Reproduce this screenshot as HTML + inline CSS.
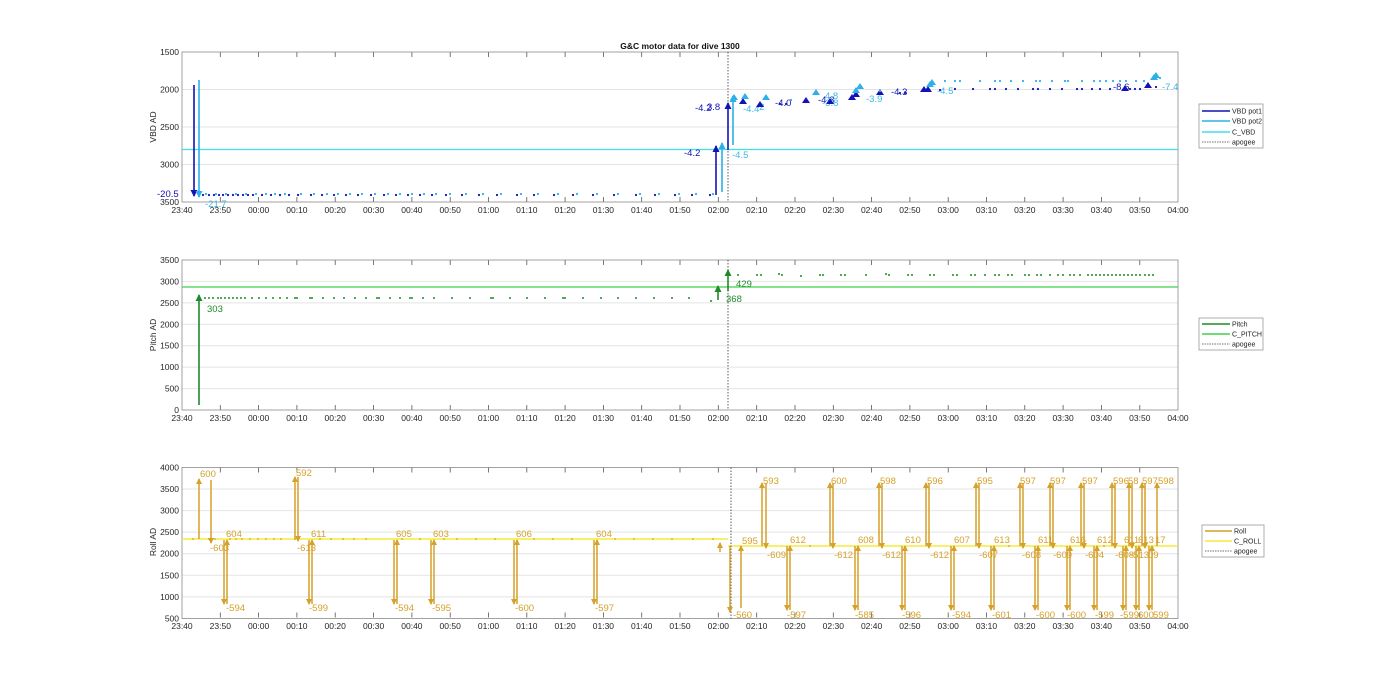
<!DOCTYPE html>
<html><head><meta charset="utf-8"><style>
html,body{margin:0;padding:0;background:#fff;}
svg{display:block;font-family:"Liberation Sans",Arial,sans-serif;}
.tk{font-size:8.5px;fill:#262626;text-anchor:middle}
.yt{font-size:8.5px;fill:#262626;text-anchor:end}
.gr line{stroke:#e4e4e4;stroke-width:1}
.bx{fill:none;stroke:#8a8a8a;stroke-width:0.8}
</style></head><body>
<svg width="1400" height="693" viewBox="0 0 1400 693" xmlns="http://www.w3.org/2000/svg">
<defs>
<g id="vg">
<line x1="220.3" y1="0" x2="220.3" y2="150"/><line x1="258.6" y1="0" x2="258.6" y2="150"/><line x1="296.9" y1="0" x2="296.9" y2="150"/><line x1="335.2" y1="0" x2="335.2" y2="150"/><line x1="373.6" y1="0" x2="373.6" y2="150"/><line x1="411.9" y1="0" x2="411.9" y2="150"/><line x1="450.2" y1="0" x2="450.2" y2="150"/><line x1="488.5" y1="0" x2="488.5" y2="150"/><line x1="526.8" y1="0" x2="526.8" y2="150"/><line x1="565.1" y1="0" x2="565.1" y2="150"/><line x1="603.4" y1="0" x2="603.4" y2="150"/><line x1="641.7" y1="0" x2="641.7" y2="150"/><line x1="680" y1="0" x2="680" y2="150"/><line x1="718.3" y1="0" x2="718.3" y2="150"/><line x1="756.7" y1="0" x2="756.7" y2="150"/><line x1="795" y1="0" x2="795" y2="150"/><line x1="833.3" y1="0" x2="833.3" y2="150"/><line x1="871.6" y1="0" x2="871.6" y2="150"/><line x1="909.9" y1="0" x2="909.9" y2="150"/><line x1="948.2" y1="0" x2="948.2" y2="150"/><line x1="986.5" y1="0" x2="986.5" y2="150"/><line x1="1024.8" y1="0" x2="1024.8" y2="150"/><line x1="1063.1" y1="0" x2="1063.1" y2="150"/><line x1="1101.4" y1="0" x2="1101.4" y2="150"/><line x1="1139.8" y1="0" x2="1139.8" y2="150"/>
</g>
<g id="tks" stroke="#555" stroke-width="0.8">
<path d="M220.3 0v5M258.6 0v5M296.9 0v5M335.2 0v5M373.6 0v5M411.9 0v5M450.2 0v5M488.5 0v5M526.8 0v5M565.1 0v5M603.4 0v5M641.7 0v5M680 0v5M718.3 0v5M756.7 0v5M795 0v5M833.3 0v5M871.6 0v5M909.9 0v5M948.2 0v5M986.5 0v5M1024.8 0v5M1063.1 0v5M1101.4 0v5M1139.8 0v5M220.3 150v-5M258.6 150v-5M296.9 150v-5M335.2 150v-5M373.6 150v-5M411.9 150v-5M450.2 150v-5M488.5 150v-5M526.8 150v-5M565.1 150v-5M603.4 150v-5M641.7 150v-5M680 150v-5M718.3 150v-5M756.7 150v-5M795 150v-5M833.3 150v-5M871.6 150v-5M909.9 150v-5M948.2 150v-5M986.5 150v-5M1024.8 150v-5M1063.1 150v-5M1101.4 150v-5M1139.8 150v-5"/>
</g>
<marker id="mR" markerWidth="6" markerHeight="6" refX="5" refY="3" orient="auto" markerUnits="userSpaceOnUse"><path d="M0 0L6 3L0 6z" fill="#D4A12A"/></marker>
<marker id="mG" markerWidth="7" markerHeight="7" refX="6" refY="3.5" orient="auto" markerUnits="userSpaceOnUse"><path d="M0 0L7 3.5L0 7z" fill="#1E8A2A"/></marker>
<marker id="mB" markerWidth="7" markerHeight="7" refX="6" refY="3.5" orient="auto" markerUnits="userSpaceOnUse"><path d="M0 0L7 3.5L0 7z" fill="#1212B8"/></marker>
<marker id="mL" markerWidth="7" markerHeight="7" refX="6" refY="3.5" orient="auto" markerUnits="userSpaceOnUse"><path d="M0 0L7 3.5L0 7z" fill="#2CB0E8"/></marker>
</defs>

<text x="680" y="49" style="font-size:8.5px;font-weight:bold;fill:#111;text-anchor:middle">G&amp;C motor data for dive 1300</text>

<!-- ===== TOP VBD ===== -->
<g class="gr"><use href="#vg" transform="translate(0,52)"/>
<line x1="182" y1="89.5" x2="1178" y2="89.5"/><line x1="182" y1="127" x2="1178" y2="127"/><line x1="182" y1="164.5" x2="1178" y2="164.5"/></g>
<use href="#tks" transform="translate(0,52)"/>
<rect class="bx" x="182" y="52" width="996" height="150"/>
<g class="yt"><text x="179" y="55">1500</text><text x="179" y="92.5">2000</text><text x="179" y="130">2500</text><text x="179" y="167.5">3000</text><text x="179" y="205">3500</text></g>
<text transform="translate(156,127) rotate(-90)" style="font-size:8.5px;fill:#262626;text-anchor:middle">VBD AD</text>
<line x1="182" y1="149.5" x2="1178" y2="149.5" stroke="#3EE0E8" stroke-width="1.2"/>
<line x1="728" y1="52" x2="728" y2="202" stroke="#333" stroke-width="0.8" stroke-dasharray="1.5,1.5"/>
<!-- arrows -->
<line x1="194" y1="85" x2="194" y2="196" stroke="#1212B8" stroke-width="1.6" marker-end="url(#mB)"/>
<line x1="199" y1="80" x2="199" y2="197" stroke="#2CB0E8" stroke-width="1.6" marker-end="url(#mL)"/>
<line x1="716" y1="195" x2="716" y2="146" stroke="#1212B8" stroke-width="1.6" marker-end="url(#mB)"/>
<line x1="722" y1="192" x2="722" y2="143" stroke="#2CB0E8" stroke-width="1.6" marker-end="url(#mL)"/>
<line x1="728" y1="150" x2="728" y2="103" stroke="#1212B8" stroke-width="1.6" marker-end="url(#mB)"/>
<line x1="733" y1="145" x2="733" y2="96" stroke="#2CB0E8" stroke-width="1.6" marker-end="url(#mL)"/>
<g fill="#1212B8" style="font-size:9.5px">
<text x="157" y="197">-20.5</text><text x="684" y="156">-4.2</text><text x="695" y="111">-4.2</text><text x="707" y="110">3.8</text><text x="775" y="106">-4.0</text><text x="818" y="103">-4.3</text><text x="891" y="95">-4.3</text><text x="1113" y="90">-8.6</text>
</g>
<g fill="#3DB8E6" style="font-size:9.5px">
<text x="205" y="207">-21.7</text><text x="732" y="158">-4.5</text><text x="743" y="112">-4.4</text><text x="756" y="110">-2</text><text x="822" y="106">-3.8</text><text x="866" y="102">-3.9</text><text x="937" y="94">-4.5</text><text x="1162" y="90">-7.4</text><text x="825" y="99">4.8</text>
</g>
<!-- triangles -->
<g fill="#1212B8">
<path d="M739 104l4-6 4 6z M756 107l4-6 4 6z M802 103l4-6 4 6z M826 104l4-6 4 6z M848 100l4-6 4 6z M852 97l4-6 4 6z M876 95l4-6 4 6z M920 92l4-6 4 6z M924 92l4-6 4 6z M1121 91l4-6 4 6z M1144 88l4-6 4 6z"/>
</g>
<g fill="#2CB0E8">
<path d="M730 100l4-6 4 6z M741 99l4-6 4 6z M762 100l4-6 4 6z M812 95l4-6 4 6z M852 93l4-6 4 6z M856 89l4-6 4 6z M926 87l4-6 4 6z M928 85l4-6 4 6z M1150 80l4-6 4 6z M1152 78l4-6 4 6z"/>
</g>
<!-- dots pre-apogee -->
<g fill="#1212B8">
<circle cx="203" cy="195" r="1.1"/><circle cx="209" cy="195" r="1.1"/><circle cx="214" cy="195" r="1.1"/><circle cx="219" cy="195" r="1.1"/><circle cx="223" cy="195" r="1.1"/><circle cx="228" cy="195" r="1.1"/><circle cx="233" cy="195" r="1.1"/><circle cx="238" cy="195" r="1.1"/><circle cx="243" cy="195" r="1.1"/><circle cx="248" cy="195" r="1.1"/><circle cx="253" cy="195" r="1.1"/><circle cx="262" cy="195" r="1.1"/><circle cx="271" cy="195" r="1.1"/><circle cx="280" cy="195" r="1.1"/><circle cx="289" cy="195" r="1.1"/><circle cx="298" cy="195" r="1.1"/><circle cx="311" cy="195" r="1.1"/><circle cx="322" cy="195" r="1.1"/><circle cx="334" cy="195" r="1.1"/><circle cx="346" cy="195" r="1.1"/><circle cx="358" cy="195" r="1.1"/><circle cx="371" cy="195" r="1.1"/><circle cx="384" cy="195" r="1.1"/><circle cx="396" cy="195" r="1.1"/><circle cx="408" cy="195" r="1.1"/><circle cx="420" cy="195" r="1.1"/><circle cx="432" cy="195" r="1.1"/><circle cx="446" cy="195" r="1.1"/><circle cx="462" cy="195" r="1.1"/><circle cx="479" cy="195" r="1.1"/><circle cx="497" cy="195" r="1.1"/><circle cx="517" cy="195" r="1.1"/><circle cx="534" cy="195" r="1.1"/><circle cx="554" cy="195" r="1.1"/><circle cx="573" cy="195" r="1.1"/><circle cx="593" cy="195" r="1.1"/><circle cx="614" cy="195" r="1.1"/><circle cx="636" cy="195" r="1.1"/><circle cx="655" cy="195" r="1.1"/><circle cx="675" cy="195" r="1.1"/><circle cx="692" cy="195" r="1.1"/><circle cx="710" cy="195" r="1.1"/>
</g>
<g fill="#2CB0E8">
<circle cx="206" cy="194" r="1.1"/><circle cx="216" cy="194" r="1.1"/><circle cx="226" cy="194" r="1.1"/><circle cx="236" cy="194" r="1.1"/><circle cx="246" cy="194" r="1.1"/><circle cx="256" cy="194" r="1.1"/><circle cx="266" cy="194" r="1.1"/><circle cx="275" cy="194" r="1.1"/><circle cx="285" cy="194" r="1.1"/><circle cx="301" cy="194" r="1.1"/><circle cx="314" cy="194" r="1.1"/><circle cx="327" cy="194" r="1.1"/><circle cx="338" cy="194" r="1.1"/><circle cx="350" cy="194" r="1.1"/><circle cx="362" cy="194" r="1.1"/><circle cx="375" cy="194" r="1.1"/><circle cx="388" cy="194" r="1.1"/><circle cx="400" cy="194" r="1.1"/><circle cx="412" cy="194" r="1.1"/><circle cx="424" cy="194" r="1.1"/><circle cx="436" cy="194" r="1.1"/><circle cx="450" cy="194" r="1.1"/><circle cx="466" cy="194" r="1.1"/><circle cx="483" cy="194" r="1.1"/><circle cx="501" cy="194" r="1.1"/><circle cx="521" cy="194" r="1.1"/><circle cx="538" cy="194" r="1.1"/><circle cx="558" cy="194" r="1.1"/><circle cx="577" cy="194" r="1.1"/><circle cx="597" cy="194" r="1.1"/><circle cx="618" cy="194" r="1.1"/><circle cx="640" cy="194" r="1.1"/><circle cx="659" cy="194" r="1.1"/><circle cx="679" cy="194" r="1.1"/><circle cx="696" cy="194" r="1.1"/><circle cx="713" cy="194" r="1.1"/>
</g>
<!-- dots post-apogee -->
<g fill="#1212B8">
<circle cx="780" cy="104" r="1.1"/><circle cx="786" cy="104" r="1.1"/><circle cx="900" cy="93" r="1.1"/><circle cx="905" cy="93" r="1.1"/><circle cx="940" cy="90" r="1.1"/><circle cx="955" cy="89" r="1.1"/><circle cx="973" cy="89" r="1.1"/><circle cx="990" cy="89" r="1.1"/><circle cx="995" cy="89" r="1.1"/><circle cx="1006" cy="89" r="1.1"/><circle cx="1018" cy="89" r="1.1"/><circle cx="1033" cy="89" r="1.1"/><circle cx="1038" cy="89" r="1.1"/><circle cx="1050" cy="89" r="1.1"/><circle cx="1062" cy="89" r="1.1"/><circle cx="1077" cy="89" r="1.1"/><circle cx="1082" cy="89" r="1.1"/><circle cx="1092" cy="89" r="1.1"/><circle cx="1100" cy="89" r="1.1"/><circle cx="1110" cy="89" r="1.1"/><circle cx="1130" cy="89" r="1.1"/><circle cx="1135" cy="89" r="1.1"/><circle cx="1140" cy="89" r="1.1"/><circle cx="1156" cy="87" r="1.1"/>
</g>
<g fill="#2CB0E8">
<circle cx="791" cy="100" r="1.1"/><circle cx="880" cy="91" r="1.1"/><circle cx="945" cy="81" r="1.1"/><circle cx="955" cy="81" r="1.1"/><circle cx="960" cy="81" r="1.1"/><circle cx="980" cy="81" r="1.1"/><circle cx="995" cy="81" r="1.1"/><circle cx="1000" cy="81" r="1.1"/><circle cx="1011" cy="81" r="1.1"/><circle cx="1023" cy="81" r="1.1"/><circle cx="1036" cy="81" r="1.1"/><circle cx="1040" cy="81" r="1.1"/><circle cx="1052" cy="81" r="1.1"/><circle cx="1065" cy="81" r="1.1"/><circle cx="1068" cy="81" r="1.1"/><circle cx="1082" cy="81" r="1.1"/><circle cx="1094" cy="81" r="1.1"/><circle cx="1100" cy="81" r="1.1"/><circle cx="1106" cy="81" r="1.1"/><circle cx="1113" cy="81" r="1.1"/><circle cx="1120" cy="81" r="1.1"/><circle cx="1126" cy="81" r="1.1"/><circle cx="1136" cy="81" r="1.1"/><circle cx="1144" cy="81" r="1.1"/><circle cx="1160" cy="78" r="1.1"/>
</g>
<!-- x labels top -->
<g class="tk"><text x="182" y="213">23:40</text><text x="220.3" y="213">23:50</text><text x="258.6" y="213">00:00</text><text x="296.9" y="213">00:10</text><text x="335.2" y="213">00:20</text><text x="373.6" y="213">00:30</text><text x="411.9" y="213">00:40</text><text x="450.2" y="213">00:50</text><text x="488.5" y="213">01:00</text><text x="526.8" y="213">01:10</text><text x="565.1" y="213">01:20</text><text x="603.4" y="213">01:30</text><text x="641.7" y="213">01:40</text><text x="680" y="213">01:50</text><text x="718.3" y="213">02:00</text><text x="756.7" y="213">02:10</text><text x="795" y="213">02:20</text><text x="833.3" y="213">02:30</text><text x="871.6" y="213">02:40</text><text x="909.9" y="213">02:50</text><text x="948.2" y="213">03:00</text><text x="986.5" y="213">03:10</text><text x="1024.8" y="213">03:20</text><text x="1063.1" y="213">03:30</text><text x="1101.4" y="213">03:40</text><text x="1139.8" y="213">03:50</text><text x="1178" y="213">04:00</text></g>
<!-- legend top -->
<rect x="1199" y="104" width="64" height="44" fill="#fff" stroke="#999" stroke-width="0.8"/>
<line x1="1202" y1="111" x2="1230" y2="111" stroke="#1212B8" stroke-width="1.5"/>
<line x1="1202" y1="121" x2="1230" y2="121" stroke="#2CB0E8" stroke-width="1.5"/>
<line x1="1202" y1="132" x2="1230" y2="132" stroke="#3EE0E8" stroke-width="1.5"/>
<line x1="1202" y1="142" x2="1230" y2="142" stroke="#444" stroke-width="0.8" stroke-dasharray="1.5,1"/>
<g style="font-size:7px;fill:#222"><text x="1232" y="113.5">VBD pot1</text><text x="1232" y="123.5">VBD pot2</text><text x="1232" y="134.5">C_VBD</text><text x="1232" y="144.5">apogee</text></g>

<!-- ===== MIDDLE PITCH ===== -->
<g class="gr"><use href="#vg" transform="translate(0,260)"/>
<line x1="182" y1="281.4" x2="1178" y2="281.4"/><line x1="182" y1="302.9" x2="1178" y2="302.9"/><line x1="182" y1="324.3" x2="1178" y2="324.3"/><line x1="182" y1="345.7" x2="1178" y2="345.7"/><line x1="182" y1="367.1" x2="1178" y2="367.1"/><line x1="182" y1="388.6" x2="1178" y2="388.6"/></g>
<use href="#tks" transform="translate(0,260)"/>
<rect class="bx" x="182" y="260" width="996" height="150"/>
<g class="yt"><text x="179" y="263">3500</text><text x="179" y="284.4">3000</text><text x="179" y="305.9">2500</text><text x="179" y="327.3">2000</text><text x="179" y="348.7">1500</text><text x="179" y="370.1">1000</text><text x="179" y="391.6">500</text><text x="179" y="413">0</text></g>
<text transform="translate(156,335) rotate(-90)" style="font-size:8.5px;fill:#262626;text-anchor:middle">Pitch AD</text>
<line x1="182" y1="287" x2="1178" y2="287" stroke="#3ED04A" stroke-width="1.2"/>
<line x1="728" y1="260" x2="728" y2="410" stroke="#333" stroke-width="0.8" stroke-dasharray="1.5,1.5"/>
<line x1="199" y1="405" x2="199" y2="295" stroke="#1E8A2A" stroke-width="1.6" marker-end="url(#mG)"/>
<line x1="718" y1="300" x2="718" y2="286" stroke="#1E8A2A" stroke-width="1.6" marker-end="url(#mG)"/>
<line x1="728" y1="291" x2="728" y2="270" stroke="#1E8A2A" stroke-width="1.6" marker-end="url(#mG)"/>
<g fill="#1E8A2A" style="font-size:9.5px"><text x="207" y="312">303</text><text x="726" y="302">368</text><text x="736" y="287">429</text></g>
<g fill="#1E8A2A">
<circle cx="205" cy="298" r="1"/><circle cx="209" cy="298" r="1"/><circle cx="213" cy="298" r="1"/><circle cx="218" cy="298" r="1"/><circle cx="221" cy="298" r="1"/><circle cx="225" cy="298" r="1"/><circle cx="229" cy="298" r="1"/><circle cx="233" cy="298" r="1"/><circle cx="237" cy="298" r="1"/><circle cx="241" cy="298" r="1"/><circle cx="245" cy="298" r="1"/><circle cx="252" cy="298" r="1"/><circle cx="259" cy="298" r="1"/><circle cx="266" cy="298" r="1"/><circle cx="273" cy="298" r="1"/><circle cx="280" cy="298" r="1"/><circle cx="287" cy="298" r="1"/><circle cx="295" cy="298" r="1"/><circle cx="297" cy="298" r="1"/><circle cx="310" cy="298" r="1"/><circle cx="312" cy="298" r="1"/><circle cx="323" cy="298" r="1"/><circle cx="334" cy="298" r="1"/><circle cx="344" cy="298" r="1"/><circle cx="355" cy="298" r="1"/><circle cx="366" cy="298" r="1"/><circle cx="377" cy="298" r="1"/><circle cx="379" cy="298" r="1"/><circle cx="390" cy="298" r="1"/><circle cx="400" cy="298" r="1"/><circle cx="410" cy="298" r="1"/><circle cx="412" cy="298" r="1"/><circle cx="423" cy="298" r="1"/><circle cx="434" cy="298" r="1"/><circle cx="452" cy="298" r="1"/><circle cx="470" cy="298" r="1"/><circle cx="491" cy="298" r="1"/><circle cx="493" cy="298" r="1"/><circle cx="510" cy="298" r="1"/><circle cx="527" cy="298" r="1"/><circle cx="545" cy="298" r="1"/><circle cx="563" cy="298" r="1"/><circle cx="565" cy="298" r="1"/><circle cx="583" cy="298" r="1"/><circle cx="601" cy="298" r="1"/><circle cx="618" cy="298" r="1"/><circle cx="636" cy="298" r="1"/><circle cx="654" cy="298" r="1"/><circle cx="672" cy="298" r="1"/><circle cx="689" cy="298" r="1"/><circle cx="711" cy="301" r="1"/>
<circle cx="738" cy="275" r="1"/><circle cx="757" cy="275" r="1"/><circle cx="761" cy="275" r="1"/><circle cx="779" cy="274" r="1"/><circle cx="782" cy="275" r="1"/><circle cx="801" cy="276" r="1"/><circle cx="820" cy="275" r="1"/><circle cx="823" cy="275" r="1"/><circle cx="841" cy="275" r="1"/><circle cx="845" cy="275" r="1"/><circle cx="866" cy="275" r="1"/><circle cx="886" cy="274" r="1"/><circle cx="889" cy="275" r="1"/><circle cx="908" cy="275" r="1"/><circle cx="912" cy="275" r="1"/><circle cx="930" cy="275" r="1"/><circle cx="934" cy="275" r="1"/><circle cx="953" cy="275" r="1"/><circle cx="957" cy="275" r="1"/><circle cx="971" cy="275" r="1"/><circle cx="975" cy="275" r="1"/><circle cx="985" cy="275" r="1"/><circle cx="995" cy="275" r="1"/><circle cx="999" cy="275" r="1"/><circle cx="1008" cy="275" r="1"/><circle cx="1012" cy="275" r="1"/><circle cx="1025" cy="275" r="1"/><circle cx="1029" cy="275" r="1"/><circle cx="1037" cy="275" r="1"/><circle cx="1041" cy="275" r="1"/><circle cx="1050" cy="275" r="1"/><circle cx="1058" cy="275" r="1"/><circle cx="1063" cy="275" r="1"/><circle cx="1070" cy="275" r="1"/><circle cx="1074" cy="275" r="1"/><circle cx="1080" cy="275" r="1"/><circle cx="1088" cy="275" r="1"/><circle cx="1092" cy="275" r="1"/><circle cx="1096" cy="275" r="1"/><circle cx="1100" cy="275" r="1"/><circle cx="1104" cy="275" r="1"/><circle cx="1108" cy="275" r="1"/><circle cx="1112" cy="275" r="1"/><circle cx="1116" cy="275" r="1"/><circle cx="1120" cy="275" r="1"/><circle cx="1124" cy="275" r="1"/><circle cx="1128" cy="275" r="1"/><circle cx="1132" cy="275" r="1"/><circle cx="1136" cy="275" r="1"/><circle cx="1140" cy="275" r="1"/><circle cx="1145" cy="275" r="1"/><circle cx="1149" cy="275" r="1"/><circle cx="1153" cy="275" r="1"/>
</g>
<g class="tk"><text x="182" y="421">23:40</text><text x="220.3" y="421">23:50</text><text x="258.6" y="421">00:00</text><text x="296.9" y="421">00:10</text><text x="335.2" y="421">00:20</text><text x="373.6" y="421">00:30</text><text x="411.9" y="421">00:40</text><text x="450.2" y="421">00:50</text><text x="488.5" y="421">01:00</text><text x="526.8" y="421">01:10</text><text x="565.1" y="421">01:20</text><text x="603.4" y="421">01:30</text><text x="641.7" y="421">01:40</text><text x="680" y="421">01:50</text><text x="718.3" y="421">02:00</text><text x="756.7" y="421">02:10</text><text x="795" y="421">02:20</text><text x="833.3" y="421">02:30</text><text x="871.6" y="421">02:40</text><text x="909.9" y="421">02:50</text><text x="948.2" y="421">03:00</text><text x="986.5" y="421">03:10</text><text x="1024.8" y="421">03:20</text><text x="1063.1" y="421">03:30</text><text x="1101.4" y="421">03:40</text><text x="1139.8" y="421">03:50</text><text x="1178" y="421">04:00</text></g>
<rect x="1199" y="318" width="64" height="32" fill="#fff" stroke="#999" stroke-width="0.8"/>
<line x1="1202" y1="324" x2="1230" y2="324" stroke="#1E8A2A" stroke-width="1.5"/>
<line x1="1202" y1="334" x2="1230" y2="334" stroke="#3ED04A" stroke-width="1.5"/>
<line x1="1202" y1="344" x2="1230" y2="344" stroke="#444" stroke-width="0.8" stroke-dasharray="1.5,1"/>
<g style="font-size:7px;fill:#222"><text x="1232" y="326.5">Pitch</text><text x="1232" y="336.5">C_PITCH</text><text x="1232" y="346.5">apogee</text></g>

<!-- ===== BOTTOM ROLL ===== -->
<g class="gr"><use href="#vg" transform="translate(0,467.5)"/>
<line x1="182" y1="489" x2="1178" y2="489"/><line x1="182" y1="510.6" x2="1178" y2="510.6"/><line x1="182" y1="532.1" x2="1178" y2="532.1"/><line x1="182" y1="553.7" x2="1178" y2="553.7"/><line x1="182" y1="575.3" x2="1178" y2="575.3"/><line x1="182" y1="596.9" x2="1178" y2="596.9"/></g>
<use href="#tks" transform="translate(0,467.5)"/>
<rect class="bx" x="182" y="467.5" width="996" height="151"/>
<g class="yt"><text x="179" y="470.5">4000</text><text x="179" y="492">3500</text><text x="179" y="513.6">3000</text><text x="179" y="535.1">2500</text><text x="179" y="556.7">2000</text><text x="179" y="578.3">1500</text><text x="179" y="599.9">1000</text><text x="179" y="621.5">500</text></g>
<text transform="translate(156,542) rotate(-90)" style="font-size:8.5px;fill:#262626;text-anchor:middle">Roll AD</text>
<path d="M182 539H728" stroke="#F5EB3C" stroke-width="1.4"/>
<path d="M728 546H1178" stroke="#F5EB3C" stroke-width="1.4"/>
<line x1="731" y1="467.5" x2="731" y2="618.5" stroke="#333" stroke-width="0.8" stroke-dasharray="1.5,1.5"/>
<g fill="#D4A12A">
<circle cx="193" cy="539" r="0.9"/><circle cx="209" cy="539" r="0.9"/><circle cx="215" cy="539" r="0.9"/><circle cx="230" cy="539" r="0.9"/><circle cx="236" cy="539" r="0.9"/><circle cx="242" cy="539" r="0.9"/><circle cx="250" cy="539" r="0.9"/><circle cx="258" cy="539" r="0.9"/><circle cx="266" cy="539" r="0.9"/><circle cx="274" cy="539" r="0.9"/><circle cx="281" cy="539" r="0.9"/><circle cx="320" cy="539" r="0.9"/><circle cx="331" cy="539" r="0.9"/><circle cx="343" cy="539" r="0.9"/><circle cx="354" cy="539" r="0.9"/><circle cx="366" cy="539" r="0.9"/><circle cx="402" cy="539" r="0.9"/><circle cx="420" cy="539" r="0.9"/><circle cx="444" cy="539" r="0.9"/><circle cx="457" cy="539" r="0.9"/><circle cx="476" cy="539" r="0.9"/><circle cx="495" cy="539" r="0.9"/><circle cx="534" cy="539" r="0.9"/><circle cx="553" cy="539" r="0.9"/><circle cx="572" cy="539" r="0.9"/><circle cx="615" cy="539" r="0.9"/><circle cx="634" cy="539" r="0.9"/><circle cx="653" cy="539" r="0.9"/><circle cx="672" cy="539" r="0.9"/><circle cx="693" cy="539" r="0.9"/><circle cx="713" cy="539" r="0.9"/><circle cx="810" cy="546" r="0.9"/><circle cx="1009" cy="546" r="0.9"/><circle cx="1104" cy="546" r="0.9"/>
</g>
<g stroke="#D4A12A" stroke-width="1.5" fill="none">
<!-- left -->
<line x1="199" y1="539" x2="199" y2="479" marker-end="url(#mR)"/>
<line x1="211" y1="480" x2="211" y2="543" marker-end="url(#mR)"/>
<line x1="224" y1="540" x2="224" y2="604" marker-end="url(#mR)"/>
<line x1="227" y1="604" x2="227" y2="540" marker-end="url(#mR)"/>
<line x1="295" y1="540" x2="295" y2="477" marker-end="url(#mR)"/>
<line x1="298" y1="477" x2="298" y2="541" marker-end="url(#mR)"/>
<line x1="309" y1="540" x2="309" y2="604" marker-end="url(#mR)"/>
<line x1="312" y1="604" x2="312" y2="540" marker-end="url(#mR)"/>
<line x1="394" y1="540" x2="394" y2="604" marker-end="url(#mR)"/><line x1="397" y1="604" x2="397" y2="540" marker-end="url(#mR)"/>
<line x1="431" y1="540" x2="431" y2="604" marker-end="url(#mR)"/><line x1="434" y1="604" x2="434" y2="540" marker-end="url(#mR)"/>
<line x1="514" y1="540" x2="514" y2="604" marker-end="url(#mR)"/><line x1="517" y1="604" x2="517" y2="540" marker-end="url(#mR)"/>
<line x1="594" y1="540" x2="594" y2="604" marker-end="url(#mR)"/><line x1="597" y1="604" x2="597" y2="540" marker-end="url(#mR)"/>
<line x1="720" y1="552" x2="720" y2="543" marker-end="url(#mR)"/>
<!-- right -->
<line x1="730" y1="546" x2="730" y2="612" marker-end="url(#mR)"/>
<line x1="741" y1="608" x2="741" y2="546" marker-end="url(#mR)"/>
<line x1="762" y1="546" x2="762" y2="483" marker-end="url(#mR)"/><line x1="766" y1="483" x2="766" y2="548" marker-end="url(#mR)"/>
<line x1="787" y1="546" x2="787" y2="610" marker-end="url(#mR)"/><line x1="790" y1="610" x2="790" y2="546" marker-end="url(#mR)"/>
<line x1="830" y1="546" x2="830" y2="483" marker-end="url(#mR)"/><line x1="833" y1="483" x2="833" y2="548" marker-end="url(#mR)"/>
<line x1="855" y1="546" x2="855" y2="610" marker-end="url(#mR)"/><line x1="858" y1="610" x2="858" y2="546" marker-end="url(#mR)"/>
<line x1="879" y1="546" x2="879" y2="483" marker-end="url(#mR)"/><line x1="882" y1="483" x2="882" y2="548" marker-end="url(#mR)"/>
<line x1="902" y1="546" x2="902" y2="610" marker-end="url(#mR)"/><line x1="905" y1="610" x2="905" y2="546" marker-end="url(#mR)"/>
<line x1="926" y1="546" x2="926" y2="483" marker-end="url(#mR)"/><line x1="929" y1="483" x2="929" y2="548" marker-end="url(#mR)"/>
<line x1="951" y1="546" x2="951" y2="610" marker-end="url(#mR)"/><line x1="954" y1="610" x2="954" y2="546" marker-end="url(#mR)"/>
<line x1="976" y1="546" x2="976" y2="483" marker-end="url(#mR)"/><line x1="979" y1="483" x2="979" y2="548" marker-end="url(#mR)"/>
<line x1="991" y1="546" x2="991" y2="610" marker-end="url(#mR)"/><line x1="994" y1="610" x2="994" y2="546" marker-end="url(#mR)"/>
<line x1="1020" y1="546" x2="1020" y2="483" marker-end="url(#mR)"/><line x1="1023" y1="483" x2="1023" y2="548" marker-end="url(#mR)"/>
<line x1="1035" y1="546" x2="1035" y2="610" marker-end="url(#mR)"/><line x1="1038" y1="610" x2="1038" y2="546" marker-end="url(#mR)"/>
<line x1="1050" y1="546" x2="1050" y2="483" marker-end="url(#mR)"/><line x1="1053" y1="483" x2="1053" y2="548" marker-end="url(#mR)"/>
<line x1="1067" y1="546" x2="1067" y2="610" marker-end="url(#mR)"/><line x1="1070" y1="610" x2="1070" y2="546" marker-end="url(#mR)"/>
<line x1="1081" y1="546" x2="1081" y2="483" marker-end="url(#mR)"/><line x1="1084" y1="483" x2="1084" y2="548" marker-end="url(#mR)"/>
<line x1="1094" y1="546" x2="1094" y2="610" marker-end="url(#mR)"/><line x1="1097" y1="610" x2="1097" y2="546" marker-end="url(#mR)"/>
<line x1="1112" y1="546" x2="1112" y2="483" marker-end="url(#mR)"/><line x1="1115" y1="483" x2="1115" y2="548" marker-end="url(#mR)"/>
<line x1="1123" y1="546" x2="1123" y2="610" marker-end="url(#mR)"/><line x1="1126" y1="610" x2="1126" y2="546" marker-end="url(#mR)"/>
<line x1="1129" y1="546" x2="1129" y2="483" marker-end="url(#mR)"/><line x1="1132" y1="483" x2="1132" y2="548" marker-end="url(#mR)"/>
<line x1="1136" y1="546" x2="1136" y2="610" marker-end="url(#mR)"/><line x1="1139" y1="610" x2="1139" y2="546" marker-end="url(#mR)"/>
<line x1="1142" y1="546" x2="1142" y2="483" marker-end="url(#mR)"/><line x1="1145" y1="483" x2="1145" y2="548" marker-end="url(#mR)"/>
<line x1="1149" y1="546" x2="1149" y2="610" marker-end="url(#mR)"/><line x1="1152" y1="610" x2="1152" y2="546" marker-end="url(#mR)"/>
<line x1="1157" y1="546" x2="1157" y2="483" marker-end="url(#mR)"/>
</g>
<g fill="#D4A12A" style="font-size:9.5px">
<text x="200" y="477">600</text><text x="210" y="551">-603</text><text x="226" y="537">604</text><text x="226" y="611">-594</text>
<text x="296" y="476">592</text><text x="297" y="551">-613</text><text x="311" y="537">611</text><text x="309" y="611">-599</text>
<text x="396" y="537">605</text><text x="395" y="611">-594</text><text x="433" y="537">603</text><text x="432" y="611">-595</text>
<text x="516" y="537">606</text><text x="515" y="611">-600</text><text x="596" y="537">604</text><text x="595" y="611">-597</text>
<text x="733" y="618">-560</text><text x="742" y="544">595</text><text x="763" y="484">593</text><text x="767" y="558">-609</text>
<text x="790" y="543">612</text><text x="787" y="618">-597</text><text x="831" y="484">600</text><text x="834" y="558">-612</text>
<text x="858" y="543">608</text><text x="855" y="618">-585</text><text x="880" y="484">598</text><text x="882" y="558">-612</text>
<text x="905" y="543">610</text><text x="902" y="618">-596</text><text x="927" y="484">596</text><text x="930" y="558">-612</text>
<text x="954" y="543">607</text><text x="952" y="618">-594</text><text x="977" y="484">595</text><text x="979" y="558">-607</text>
<text x="994" y="543">613</text><text x="992" y="618">-601</text><text x="1020" y="484">597</text><text x="1022" y="558">-608</text>
<text x="1038" y="543">611</text><text x="1036" y="618">-600</text><text x="1050" y="484">597</text><text x="1053" y="558">-609</text>
<text x="1070" y="543">616</text><text x="1067" y="618">-600</text><text x="1082" y="484">597</text><text x="1085" y="558">-604</text>
<text x="1097" y="543">612</text><text x="1095" y="618">-599</text><text x="1113" y="484">596</text><text x="1115" y="558">-608</text>
<text x="1128" y="484">58</text><text x="1124" y="543">611</text><text x="1130" y="558">-513</text><text x="1120" y="618">-599</text>
<text x="1142" y="484">597</text><text x="1138" y="543">613</text><text x="1148" y="558">09</text><text x="1138" y="618">600</text>
<text x="1158" y="484">598</text><text x="1155" y="543">17</text><text x="1153" y="618">599</text>
</g>
<g class="tk"><text x="182" y="629">23:40</text><text x="220.3" y="629">23:50</text><text x="258.6" y="629">00:00</text><text x="296.9" y="629">00:10</text><text x="335.2" y="629">00:20</text><text x="373.6" y="629">00:30</text><text x="411.9" y="629">00:40</text><text x="450.2" y="629">00:50</text><text x="488.5" y="629">01:00</text><text x="526.8" y="629">01:10</text><text x="565.1" y="629">01:20</text><text x="603.4" y="629">01:30</text><text x="641.7" y="629">01:40</text><text x="680" y="629">01:50</text><text x="718.3" y="629">02:00</text><text x="756.7" y="629">02:10</text><text x="795" y="629">02:20</text><text x="833.3" y="629">02:30</text><text x="871.6" y="629">02:40</text><text x="909.9" y="629">02:50</text><text x="948.2" y="629">03:00</text><text x="986.5" y="629">03:10</text><text x="1024.8" y="629">03:20</text><text x="1063.1" y="629">03:30</text><text x="1101.4" y="629">03:40</text><text x="1139.8" y="629">03:50</text><text x="1178" y="629">04:00</text></g>
<rect x="1202" y="525" width="62" height="32" fill="#fff" stroke="#999" stroke-width="0.8"/>
<line x1="1205" y1="531" x2="1232" y2="531" stroke="#D4A12A" stroke-width="1.5"/>
<line x1="1205" y1="541" x2="1232" y2="541" stroke="#F5EB3C" stroke-width="1.5"/>
<line x1="1205" y1="551" x2="1232" y2="551" stroke="#444" stroke-width="0.8" stroke-dasharray="1.5,1"/>
<g style="font-size:7px;fill:#222"><text x="1234" y="533.5">Roll</text><text x="1234" y="543.5">C_ROLL</text><text x="1234" y="553.5">apogee</text></g>
</svg>
</body></html>
